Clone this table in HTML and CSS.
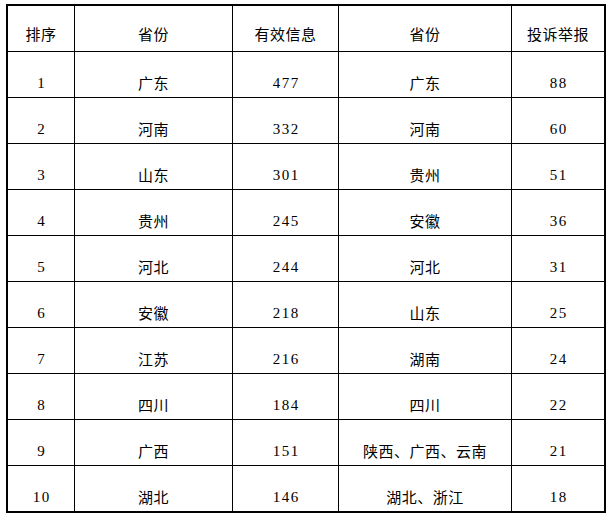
FILE: index.html
```html
<!DOCTYPE html>
<html lang="zh">
<head>
<meta charset="utf-8">
<title>排序</title>
<link rel="stylesheet" href="styles.css">
</head>
<body>
<table class="rank">
  <colgroup>
    <col class="c1"><col class="c2"><col class="c3"><col class="c4"><col class="c5">
  </colgroup>
  <thead>
    <tr><th>排序</th><th>省份</th><th>有效信息</th><th>省份</th><th>投诉举报</th></tr>
  </thead>
  <tbody>
    <tr><td class="n">1</td><td>广东</td><td class="n">477</td><td>广东</td><td class="n">88</td></tr>
    <tr><td class="n">2</td><td>河南</td><td class="n">332</td><td>河南</td><td class="n">60</td></tr>
    <tr><td class="n">3</td><td>山东</td><td class="n">301</td><td>贵州</td><td class="n">51</td></tr>
    <tr><td class="n">4</td><td>贵州</td><td class="n">245</td><td>安徽</td><td class="n">36</td></tr>
    <tr><td class="n">5</td><td>河北</td><td class="n">244</td><td>河北</td><td class="n">31</td></tr>
    <tr><td class="n">6</td><td>安徽</td><td class="n">218</td><td>山东</td><td class="n">25</td></tr>
    <tr><td class="n">7</td><td>江苏</td><td class="n">216</td><td>湖南</td><td class="n">24</td></tr>
    <tr><td class="n">8</td><td>四川</td><td class="n">184</td><td>四川</td><td class="n">22</td></tr>
    <tr><td class="n">9</td><td>广西</td><td class="n">151</td><td>陕西、广西、云南</td><td class="n">21</td></tr>
    <tr class="last"><td class="n">10</td><td>湖北</td><td class="n">146</td><td>湖北、浙江</td><td class="n">18</td></tr>
  </tbody>
</table>
</body>
</html>
```
FILE: styles.css
```css
html, body {
  background: #fff;
}
body {
  margin: 4px 0 0 6px;
  font-family: "Noto Sans CJK SC", "Liberation Serif", sans-serif;
  color: #000;
}
.rank {
  border: 2px solid #000;
  border-collapse: separate;
  border-spacing: 0;
  table-layout: fixed;
  width: 600px;
}
.c1 { width: 67px; }
.c2 { width: 158px; }
.c3 { width: 106px; }
.c4 { width: 173px; }
.c5 { width: 92px; }
.rank th,
.rank td {
  height: 45px;
  padding: 0 0 6px 0;
  box-sizing: border-box;
  border-right: 1px solid #000;
  border-bottom: 1px solid #000;
  text-align: center;
  vertical-align: bottom;
  font-size: 15px;
  line-height: 16px;
  font-weight: normal;
  letter-spacing: 0.5px;
  white-space: nowrap;
}
.rank th {
  height: 46px;
  padding-bottom: 9px;
}
.rank td {
  height: 46px;
}
.rank th:last-child,
.rank td:last-child {
  border-right: none;
}
.rank tr.last td {
  border-bottom: none;
  height: 45px;
}
.rank td.n {
  font-family: "Liberation Serif", serif;
  letter-spacing: 1.5px;
  padding-left: 1.5px;
}
```
